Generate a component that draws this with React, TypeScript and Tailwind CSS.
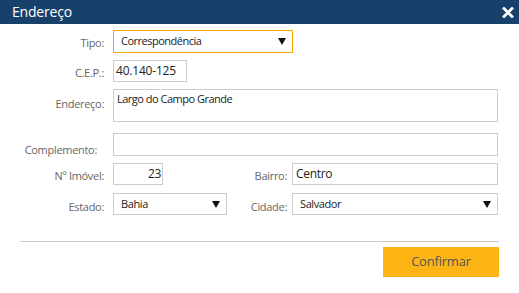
import React from "react";

const font = { fontFamily: '"Open Sans", "Noto Sans", sans-serif' };

function Arrow() {
  return (
    <svg width="8" height="7" viewBox="0 0 8 7" className="shrink-0">
      <path d="M0 0H8L4 7Z" fill="#111" />
    </svg>
  );
}

export default function App() {
  return (
    <div className="w-[519px] h-[293px] bg-white overflow-hidden" style={font}>
      <div className="h-[24px] bg-[#17406a] flex items-center justify-between pl-[12px] pr-[5px]">
        <span className="text-white text-[14px] leading-none tracking-[-0.2px]">Endereço</span>
        <svg width="12" height="11" viewBox="0 0 12 11">
          <path d="M2 1.5L10 9.5M10 1.5L2 9.5" stroke="white" strokeWidth="2.8" strokeLinecap="square" />
        </svg>
      </div>

      <div className="text-[11px] tracking-[-0.3px]">
        {/* Tipo */}
        <div className="flex mt-[6px] h-[23px]">
          <div className="w-[104px] text-right text-[#666] pt-[5px]">Tipo:</div>
          <div className="ml-[9px] w-[180px] border border-[#f5a800] flex items-center justify-between pl-[7px] pr-[6px] text-[#222] tracking-[-0.5px]">
            <span>Correspondência</span>
            <Arrow />
          </div>
        </div>
        {/* CEP */}
        <div className="flex mt-[7px] h-[22px]">
          <div className="w-[104px] text-right text-[#666] pt-[5px]">C.E.P.:</div>
          <div className="ml-[9px] w-[74px] border border-[#ccc] flex items-center pl-[2px] text-[#222] text-[12px] tracking-[-0.2px]">
            40.140-125
          </div>
        </div>
        {/* Endereço */}
        <div className="flex mt-[7px] h-[33px]">
          <div className="w-[104px] text-right text-[#666] pt-[7px]">Endereço:</div>
          <div className="ml-[9px] w-[385px] border border-[#ccc] pl-[3px] pt-[1px] text-[#222] leading-[15px] tracking-[-0.5px]">
            Largo do Campo Grande
          </div>
        </div>
        {/* Complemento */}
        <div className="flex mt-[11px] h-[23px]">
          <div className="w-[97px] text-right text-[#666] pt-[9px]">Complemento:</div>
          <div className="ml-[16px] w-[385px] border border-[#ccc]" />
        </div>
        {/* Nº Imóvel / Bairro */}
        <div className="flex mt-[7px] h-[22px]">
          <div className="w-[104px] text-right text-[#666] pt-[5px]">Nº Imóvel:</div>
          <div className="ml-[9px] w-[50px] border border-[#ccc] flex items-center justify-end pr-[1px] text-[#222] text-[12px]">
            23
          </div>
          <div className="w-[124px] text-right text-[#666] pt-[5px]">Bairro:</div>
          <div className="ml-[5px] w-[206px] border border-[#ccc] flex items-center pl-[3px] text-[#222] text-[12px] tracking-[-0.3px]">
            Centro
          </div>
        </div>
        {/* Estado / Cidade */}
        <div className="flex mt-[8px] h-[22px]">
          <div className="w-[104px] text-right text-[#666] pt-[6px]">Estado:</div>
          <div className="ml-[9px] w-[114px] border border-[#ccc] flex items-center justify-between pl-[7px] pr-[6px] text-[#222] tracking-[-0.4px]">
            <span>Bahia</span>
            <Arrow />
          </div>
          <div className="w-[60px] text-right text-[#666] pt-[6px]">Cidade:</div>
          <div className="ml-[5px] w-[206px] border border-[#ccc] flex items-center justify-between pl-[7px] pr-[6px] text-[#222] tracking-[-0.4px]">
            <span>Salvador</span>
            <Arrow />
          </div>
        </div>

        <div className="ml-[20px] mr-[20px] mt-[26px] border-t border-[#ccc]" />

        <div className="flex justify-end mr-[20px] mt-[5px]">
          <div className="w-[116px] h-[30px] bg-[#fdb515] flex items-center justify-center text-[13px] tracking-[-0.2px] text-[#555]">
            Confirmar
          </div>
        </div>
      </div>
    </div>
  );
}
